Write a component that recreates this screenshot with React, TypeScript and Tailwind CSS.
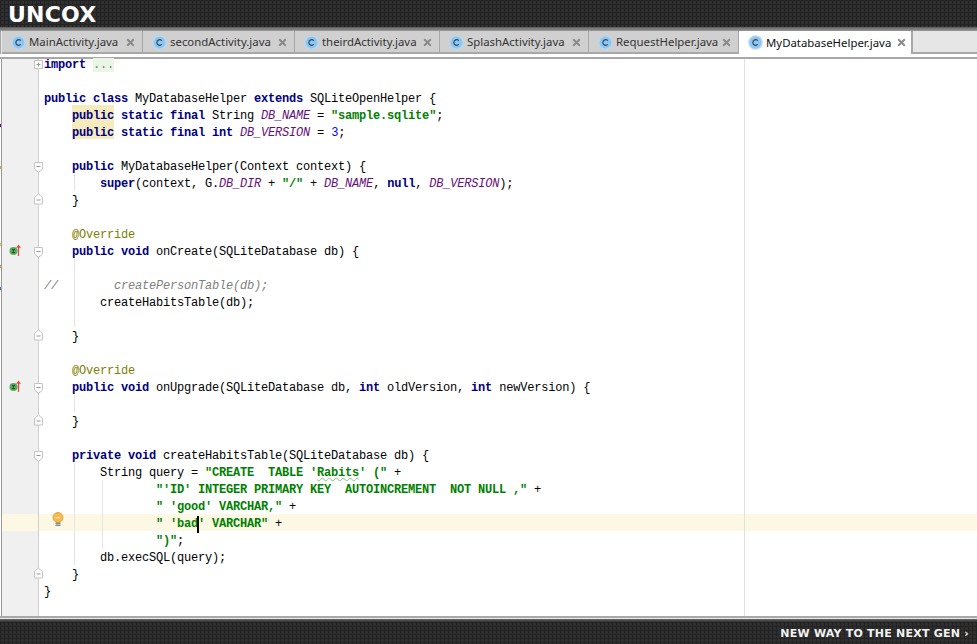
import React from "react";

const K = ({ children }: { children: React.ReactNode }) => <span className="font-bold text-[#000080]">{children}</span>;
const S = ({ children }: { children: React.ReactNode }) => <span className="font-bold text-[#008000]">{children}</span>;
const F = ({ children }: { children: React.ReactNode }) => <span className="italic text-[#660e7a]">{children}</span>;
const H = ({ children }: { children: React.ReactNode }) => (
  <span className="relative font-bold text-[#000080]">
    <span className="absolute left-0 right-0 -top-[4px] h-[17px] bg-[#f6ebbc] -z-10" />
    {children}
  </span>
);
const A = ({ children }: { children: React.ReactNode }) => <span className="text-[#808000]">{children}</span>;

function ClassIcon() {
  return (
    <svg width="15" height="15" viewBox="0 0 15 15" className="shrink-0">
      <circle cx="7.5" cy="7.5" r="6.6" fill="#8fc6ee" stroke="#b4d9f4" strokeWidth="1.3" />
      <path d="M9.8 5.6A2.9 2.9 0 0 0 4.8 7.5a2.9 2.9 0 0 0 5 1.9" fill="none" stroke="#2f4a63" strokeWidth="1.2" />
    </svg>
  );
}

function CloseIcon() {
  return (
    <svg width="9" height="9" viewBox="0 0 9 9" className="shrink-0">
      <path d="M1.2 1.2l6.6 6.6M7.8 1.2L1.2 7.8" stroke="#8a8a8a" strokeWidth="2" />
    </svg>
  );
}

function Tab({ name, width, active }: { name: string; width: string; active?: boolean }) {
  return (
    <div
      className={`${width} h-[23px] flex items-center pl-[9px] pt-[1px] shrink-0 border-[#a8a8a8] ${
        active ? "bg-white text-[#111] border-r-2 pr-[5px] pb-[1px]" : "bg-[#d0d0d0] text-[#333] border-r border-b-2 pr-[7px]"
      }`}
    >
      <ClassIcon />
      <span className="ml-[3px] text-[11.4px] leading-none font-['Noto_Sans','Open_Sans',sans-serif] whitespace-nowrap">{name}</span>
      <span className="ml-auto flex"><CloseIcon /></span>
    </div>
  );
}

function Fold({ kind }: { kind: "plus" | "open" | "close" }) {
  const top = kind === "plus" ? "-top-[1px]" : kind === "open" ? "top-[4px]" : "top-[1px]";
  return (
    <svg width="11" height="13" viewBox="0 0 11 13" className={`absolute left-[31px] ${top}`}>
      {kind === "plus" && (
        <>
          <rect x="1.5" y="2.5" width="8" height="8" fill="#fff" stroke="#c4c4c4" />
          <path d="M3.5 6.5h4M5.5 4.5v4" stroke="#999" />
        </>
      )}
      {kind === "open" && (
        <>
          <path d="M1.5 1.5h8v6.5l-4 3.5-4-3.5z" fill="#fff" stroke="#c4c4c4" />
          <path d="M3.5 5.5h4" stroke="#999" />
        </>
      )}
      {kind === "close" && (
        <>
          <path d="M1.5 12v-6.5l4-3.5 4 3.5v6.5z" fill="#fff" stroke="#c4c4c4" />
          <path d="M3.5 8h4" stroke="#999" />
        </>
      )}
    </svg>
  );
}

function Override() {
  return (
    <svg width="13" height="14" viewBox="0 0 13 14" className="absolute left-[6px] top-[1px]">
      <circle cx="5.5" cy="8" r="4" fill="#58a85c" />
      <path d="M4 6.5h3M5.5 6.5v3M4 9.5h3" stroke="#1f4d22" strokeWidth="0.9" />
      <path d="M10.5 13V3M8.7 5l1.8-2.5L12.3 5" fill="none" stroke="#dd4a38" strokeWidth="1.2" />
    </svg>
  );
}

function Bulb() {
  return (
    <svg width="12" height="16" viewBox="0 0 12 16" className="absolute left-[50px] -top-[2px]">
      <circle cx="6" cy="5.5" r="5" fill="#f5b94e" stroke="#e9a93b" />
      <path d="M3.5 5l1.2 1.2L6 5l1.3 1.2L8.5 5" fill="none" stroke="#fff3c9" />
      <rect x="3.5" y="10.5" width="5" height="1.5" fill="#8a8a8a" />
      <rect x="3.5" y="12.5" width="5" height="1.5" fill="#8a8a8a" />
    </svg>
  );
}

type RowProps = {
  children?: React.ReactNode;
  fold?: "plus" | "open" | "close";
  over?: boolean;
  bulb?: boolean;
  current?: boolean;
  g1?: boolean;
  g2?: boolean;
  first?: boolean;
};

function Row({ children, fold, over, bulb, current, g1, g2, first }: RowProps) {
  return (
    <div className={`relative flex shrink-0 ${first ? "h-[13px]" : "h-[17px]"} ${current ? "bg-[#fdf8e4]" : ""}`}>
      <div className={`relative w-[37px] shrink-0 border-r border-[#cfcfcf] ${current ? "" : "bg-[#f0f0f0]"}`}>
        {over && <Override />}
      </div>
      {fold && <Fold kind={fold} />}
      {bulb && <Bulb />}
      {g1 && <div className="absolute left-[72px] top-0 h-[17px] w-px bg-[#e4e4e4]" />}
      {g2 && <div className="absolute left-[100px] top-0 h-[17px] w-px bg-[#e4e4e4]" />}
      <div className={`relative pl-[5px] leading-[17px] whitespace-pre ${first ? "-mt-[2px]" : "pt-[2px]"}`}>{children}</div>
    </div>
  );
}

const pattern =
  "bg-[#2f2f2f] bg-[linear-gradient(#232323_1px,transparent_1px),linear-gradient(90deg,#232323_1px,transparent_1px)] bg-[size:4px_4px]";

const Tick = ({ cls }: { cls: string }) => <div className={`absolute left-0 w-px h-[3px] ${cls}`} />;

export default function App() {
  return (
    <div className="relative w-[977px] h-[644px] overflow-hidden bg-white flex flex-col">
      <header className={`${pattern} h-[27px] shrink-0 flex items-center pl-[8px]`}>
        <span className="text-white font-['DejaVu_Sans',sans-serif] font-bold text-[22px] leading-none tracking-[0.2px] pt-[2px]">UNCOX</span>
      </header>
      <div className="h-[4px] shrink-0 bg-[linear-gradient(#5f5f5f,#9a9a9a)]" />

      <nav className="h-[23px] shrink-0 flex bg-[#e6e6e6] pl-px border-l border-[#a8a8a8]">
        <Tab name="MainActivity.java" width="w-[141px]" />
        <Tab name="secondActivity.java" width="w-[152px]" />
        <Tab name="theirdActivity.java" width="w-[145px]" />
        <Tab name="SplashActivity.java" width="w-[149px]" />
        <Tab name="RequestHelper.java" width="w-[150px]" />
        <Tab name="MyDatabaseHelper.java" width="w-[174px]" active />
        <div className="flex-1 border-b-2 border-[#a8a8a8]" />
      </nav>
      <div className="h-[3px] shrink-0 bg-white" />
      <div className="h-[2px] shrink-0 bg-[#a8a8a8]" />

      <main className="relative flex-1 min-h-0 ml-px border-l border-[#999999] font-['Liberation_Mono',monospace] text-[12px] tracking-[-0.2px] text-black">
        <div className="isolate flex flex-col bg-white h-full [&>div:last-child]:flex-1">
          <Row first fold="plus"><K>import</K> <span className="bg-[#eaf5e6] text-[#6a8a6a]">...</span></Row>
          <Row />
          <Row><K>public class</K> MyDatabaseHelper <K>extends</K> SQLiteOpenHelper {"{"}</Row>
          <Row>    <H>public</H> <K>static final</K> String <F>DB_NAME</F> = <S>"sample.sqlite"</S>;</Row>
          <Row>    <H>public</H> <K>static final int</K> <F>DB_VERSION</F> = <span className="text-[#0000ff]">3</span>;</Row>
          <Row />
          <Row fold="open">    <K>public</K> MyDatabaseHelper(Context context) {"{"}</Row>
          <Row g1>        <K>super</K>(context, G.<F>DB_DIR</F> + <S>"/"</S> + <F>DB_NAME</F>, <K>null</K>, <F>DB_VERSION</F>);</Row>
          <Row fold="close">    {"}"}</Row>
          <Row />
          <Row>    <A>@Override</A></Row>
          <Row over fold="open">    <K>public void</K> onCreate(SQLiteDatabase db) {"{"}</Row>
          <Row g1 />
          <Row g1><span className="italic text-[#808080]">//        createPersonTable(db);</span></Row>
          <Row g1>        createHabitsTable(db);</Row>
          <Row g1 />
          <Row fold="close">    {"}"}</Row>
          <Row />
          <Row>    <A>@Override</A></Row>
          <Row over fold="open">    <K>public void</K> onUpgrade(SQLiteDatabase db, <K>int</K> oldVersion, <K>int</K> newVersion) {"{"}</Row>
          <Row g1 />
          <Row fold="close">    {"}"}</Row>
          <Row />
          <Row fold="open">    <K>private void</K> createHabitsTable(SQLiteDatabase db) {"{"}</Row>
          <Row g1>        String query = <S>"CREATE  TABLE '<span className="underline decoration-wavy decoration-[#8fbf8f] decoration-1">Rabits</span>' ("</S> +</Row>
          <Row g1 g2>                <S>"'ID' INTEGER PRIMARY KEY  AUTOINCREMENT  NOT NULL ,"</S> +</Row>
          <Row g1 g2>                <S>" 'good' VARCHAR,"</S> +</Row>
          <Row g1 g2 current bulb>                <S>" 'bad<span className="inline-block w-0 h-[17px] align-top border-l-2 border-black -ml-px -mr-px" />' VARCHAR"</S> +</Row>
          <Row g1 g2>                <S>")"</S>;</Row>
          <Row g1>        db.execSQL(query);</Row>
          <Row fold="close">    {"}"}</Row>
          <Row>{"}"}</Row>
          <Row />
        </div>
        <div className="absolute left-[742px] top-0 bottom-0 w-px bg-[#e0e0e0]" />
      </main>

      <div className="h-[2px] shrink-0 bg-[#a8a8a8]" />
      <div className="h-px shrink-0 bg-[#e8e8e8]" />
      <div className="h-[3px] shrink-0 bg-[linear-gradient(#6b6b6b,#2f2f2f)]" />
      <footer className={`${pattern} h-[22px] shrink-0 flex items-center justify-end pr-[8px]`}>
        <span className="text-[#f2f2f2] font-['DejaVu_Sans',sans-serif] font-bold text-[11px] leading-none tracking-[0.23px] whitespace-nowrap">NEW WAY TO THE NEXT GEN ›</span>
      </footer>

      <Tick cls="top-[124px] bg-[#4b1a7a]" />
      <Tick cls="top-[166px] bg-[#e8a040]" />
      <Tick cls="top-[243px] bg-[#e8c840]" />
      <Tick cls="top-[265px] bg-[#e8a040]" />
      <Tick cls="top-[287px] bg-[#4080d0]" />
    </div>
  );
}
